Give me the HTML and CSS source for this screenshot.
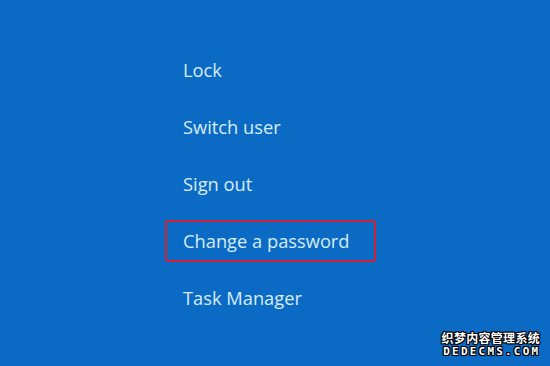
FILE: index.html
```html
<!DOCTYPE html>
<html>
<head>
<meta charset="utf-8">
<link rel="stylesheet" href="styles.css">
</head>
<body>
<div class="screen">
  <ul class="menu">
    <li class="item">Lock</li>
    <li class="item">Switch user</li>
    <li class="item">Sign out</li>
    <li class="item selected">Change a password</li>
    <li class="item">Task Manager</li>
  </ul>
  <div class="watermark">
    <div class="wm-cn">织梦内容管理系统</div>
    <div class="wm-en">DEDECMS.COM</div>
  </div>
</div>
</body>
</html>
```
FILE: styles.css
```css
html, body {
  margin: 0;
  padding: 0;
}
body {
  width: 550px;
  height: 366px;
  overflow: hidden;
  background: #0b6bc4;
}
.screen {
  position: relative;
  width: 550px;
  height: 366px;
  background: #0b6bc4;
}
.menu {
  list-style: none;
  margin: 0;
  padding: 49px 0 0 165px;
  display: flex;
  flex-direction: column;
  gap: 15px;
}
.item {
  box-sizing: border-box;
  height: 42px;
  width: 211px;
  display: flex;
  align-items: center;
  padding-bottom: 2px;
  font-family: "Open Sans", "Noto Sans", sans-serif;
  font-size: 18.3px;
  color: #d8ecf9;
  border: 2px solid transparent;
  border-radius: 3px;
  padding-left: 16px;
}
.item.selected {
  border-color: #d01f2e;
}
.watermark {
  position: absolute;
  right: 10px;
  bottom: 8px;
  display: flex;
  flex-direction: column;
  align-items: center;
  color: #fff;
  font-weight: bold;
  text-shadow: 1px 0 0 #000, -1px 0 0 #000, 0 1px 0 #000, 0 -1px 0 #000, 1px 1px 0 #000, -1px -1px 0 #000, 1px -1px 0 #000, -1px 1px 0 #000;
}
.wm-cn {
  font-family: "Noto Sans CJK SC", sans-serif;
  font-size: 12px;
  line-height: 17px;
  letter-spacing: 0.3px;
}
.wm-en {
  font-family: "DejaVu Sans Mono", monospace;
  font-size: 11px;
  line-height: 12px;
  letter-spacing: 2.2px;
  margin-right: -2px;
}
```
